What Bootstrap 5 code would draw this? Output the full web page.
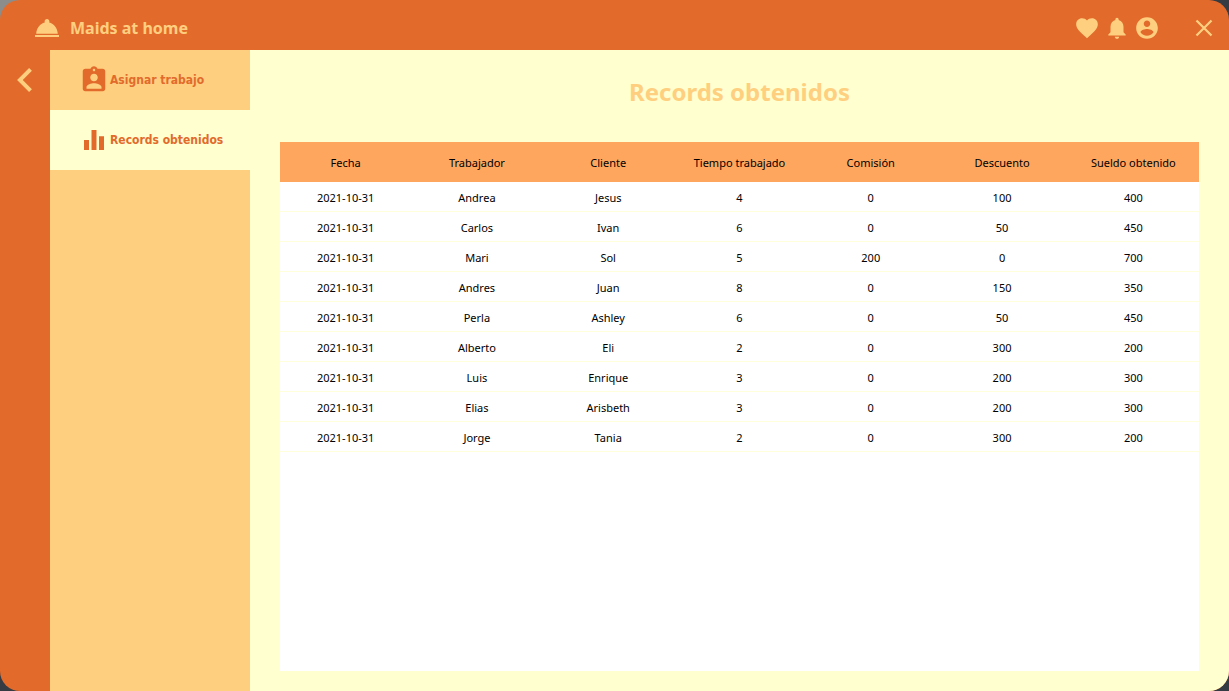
<!DOCTYPE html>
<html lang="es">
<head>
<meta charset="utf-8">
<meta name="viewport" content="width=device-width, initial-scale=1">
<title>Maids at home</title>
<link href="https://cdn.jsdelivr.net/npm/bootstrap@5.3.0/dist/css/bootstrap.min.css" rel="stylesheet">
<style>
  :root { --orange: #e26b2c; --peach: #ffcf80; --cream: #ffffcf; --salmon: #ffa65e; }
  body { font-family: "Noto Sans", "Open Sans", sans-serif; background: linear-gradient(155deg, #8b8d8c 0, #8b8d8c 20px, #343b42 60px); }
  svg { display: block; fill: currentColor; }
  .app-window { border-radius: 20px; background: var(--orange); }
  .title-bar { height: 50px; padding: 6px 16px 0 35px; color: var(--peach); }
  .app-name { margin-left: 11px; font-size: 16px; font-weight: 700; line-height: 24px; }
  .icon-btn { color: var(--peach); background: none; border: 0; padding: 0; }
  .title-actions { gap: 4px; margin-right: 35px; }
  .rail { width: 50px; padding: 18px 0 0 17px; }
  .side-menu { width: 200px; background: var(--peach); }
  .side-link { height: 60px; padding-left: 29px; gap: 1px; color: var(--orange); font-family: "DejaVu Sans Condensed", "Noto Sans", sans-serif; font-size: 12px; line-height: 20px; font-weight: 700; text-decoration: none; }
  .side-link:hover, .side-link.current { background: var(--cream); color: var(--orange); }
  .content-area { background: var(--cream); padding: 0 30px 20px; }
  .page-title { color: var(--peach); font-size: 24px; font-weight: 700; line-height: 36px; padding: 24px 0 32px; }
  .records { table-layout: fixed; border-collapse: separate; border-spacing: 0; font-size: 11px; line-height: 16px; color: #000; text-align: center; }
  .records th { height: 40px; padding: 2px 0 0; font-weight: 400; background: var(--salmon); }
  .records td { height: 30px; padding: 3px 0 0; border-bottom: 1px solid #ffffdc; }
</style>
</head>
<body>
<div class="app-window d-flex flex-column min-vh-100 overflow-hidden">
  <header class="title-bar d-flex align-items-center">
    <svg width="24" height="18" viewBox="2 5 20 14" preserveAspectRatio="none" aria-hidden="true"><path d="M2 17.400h20v1.600H2zm11.840-9.610c.1-.24.160-.51.160-.79 0-1.100-.9-2-2-2s-2 .9-2 2c0 .28.060.55.160.79C6.250 8.600 3.270 12.200 3 16.500h18c-.27-4.300-3.250-7.900-7.160-8.710z"/></svg>
    <span class="app-name">Maids at home</span>
    <div class="title-actions d-flex ms-auto">
      <button class="icon-btn" type="button" aria-label="Favoritos"><svg width="26" height="26" viewBox="0 0 24 24"><path d="M12 21.350l-1.450-1.320C5.400 15.360 2 12.280 2 8.500 2 5.420 4.420 3 7.500 3c1.740 0 3.410.81 4.500 2.090C13.090 3.810 14.760 3 16.500 3 19.580 3 22 5.420 22 8.500c0 3.780-3.400 6.860-8.550 11.540L12 21.350z"/></svg></button>
      <button class="icon-btn" type="button" aria-label="Notificaciones"><svg width="26" height="26" viewBox="0 0 24 24"><path d="M12 22c1.100 0 2-.9 2-2h-4c0 1.100.89 2 2 2zm6-6v-5c0-3.070-1.640-5.640-4.500-6.320V4c0-.83-.67-1.500-1.500-1.500s-1.500.67-1.500 1.500v.68C7.630 5.360 6 7.920 6 11v5l-2 2v1h16v-1l-2-2z"/></svg></button>
      <button class="icon-btn" type="button" aria-label="Cuenta"><svg width="26" height="26" viewBox="0 0 24 24"><path d="M12 2C6.480 2 2 6.480 2 12s4.480 10 10 10 10-4.480 10-10S17.520 2 12 2zm0 3c1.660 0 3 1.340 3 3s-1.340 3-3 3-3-1.340-3-3 1.340-3 3-3zm0 14.200c-2.500 0-4.710-1.280-6-3.220.03-1.990 4-3.080 6-3.080 1.990 0 5.970 1.090 6 3.080-1.290 1.940-3.500 3.220-6 3.220z"/></svg></button>
    </div>
    <button class="icon-btn" type="button" aria-label="Cerrar"><svg width="18" height="18" viewBox="0 0 18 18"><path d="M1.500 1.500l15 15M16.500 1.500l-15 15" fill="none" stroke="currentColor" stroke-width="2.200"/></svg></button>
  </header>
  <div class="d-flex flex-grow-1">
    <div class="rail flex-shrink-0 d-flex align-items-start">
      <button class="icon-btn" type="button" aria-label="Contraer menú"><svg width="15" height="24" viewBox="8 6 7.410 12"><path d="M15.410 7.410L14 6l-6 6 6 6 1.410-1.410L10.830 12z"/></svg></button>
    </div>
    <nav class="side-menu flex-shrink-0">
      <a class="side-link d-flex align-items-center" href="#asignar"><svg width="30" height="30" viewBox="0 0 24 24" aria-hidden="true"><path d="M19 3h-4.180C14.400 1.840 13.300 1 12 1c-1.300 0-2.400.84-2.820 2H5c-1.100 0-2 .9-2 2v14c0 1.100.9 2 2 2h14c1.100 0 2-.9 2-2V5c0-1.100-.9-2-2-2zm-7 0c.55 0 1 .45 1 1s-.45 1-1 1-1-.45-1-1 .45-1 1-1zm0 4c1.660 0 3 1.340 3 3s-1.340 3-3 3-3-1.340-3-3 1.340-3 3-3zm6 12H6v-1.400c0-2 4-3.100 6-3.100s6 1.100 6 3.100V19z"/></svg><span>Asignar trabajo</span></a>
      <a class="side-link current d-flex align-items-center" href="#records" aria-current="page"><svg width="30" height="30" viewBox="0 0 24 24" aria-hidden="true"><path d="M10 20h4V4h-4v16zm-6 0h4v-8H4v8zM16 9v11h4V9h-4z"/></svg><span>Records obtenidos</span></a>
    </nav>
    <main class="content-area flex-grow-1 d-flex flex-column">
      <h1 class="page-title text-center m-0">Records obtenidos</h1>
      <div class="bg-white flex-grow-1">
        <table class="records w-100">
          <thead><tr><th scope="col">Fecha</th><th scope="col">Trabajador</th><th scope="col">Cliente</th><th scope="col">Tiempo trabajado</th><th scope="col">Comisión</th><th scope="col">Descuento</th><th scope="col">Sueldo obtenido</th></tr></thead>
          <tbody>
            <tr><td>2021-10-31</td><td>Andrea</td><td>Jesus</td><td>4</td><td>0</td><td>100</td><td>400</td></tr>
            <tr><td>2021-10-31</td><td>Carlos</td><td>Ivan</td><td>6</td><td>0</td><td>50</td><td>450</td></tr>
            <tr><td>2021-10-31</td><td>Mari</td><td>Sol</td><td>5</td><td>200</td><td>0</td><td>700</td></tr>
            <tr><td>2021-10-31</td><td>Andres</td><td>Juan</td><td>8</td><td>0</td><td>150</td><td>350</td></tr>
            <tr><td>2021-10-31</td><td>Perla</td><td>Ashley</td><td>6</td><td>0</td><td>50</td><td>450</td></tr>
            <tr><td>2021-10-31</td><td>Alberto</td><td>Eli</td><td>2</td><td>0</td><td>300</td><td>200</td></tr>
            <tr><td>2021-10-31</td><td>Luis</td><td>Enrique</td><td>3</td><td>0</td><td>200</td><td>300</td></tr>
            <tr><td>2021-10-31</td><td>Elias</td><td>Arisbeth</td><td>3</td><td>0</td><td>200</td><td>300</td></tr>
            <tr><td>2021-10-31</td><td>Jorge</td><td>Tania</td><td>2</td><td>0</td><td>300</td><td>200</td></tr>
          </tbody>
        </table>
      </div>
    </main>
  </div>
</div>
<script src="https://cdn.jsdelivr.net/npm/bootstrap@5.3.0/dist/js/bootstrap.bundle.min.js"></script>
</body>
</html>
